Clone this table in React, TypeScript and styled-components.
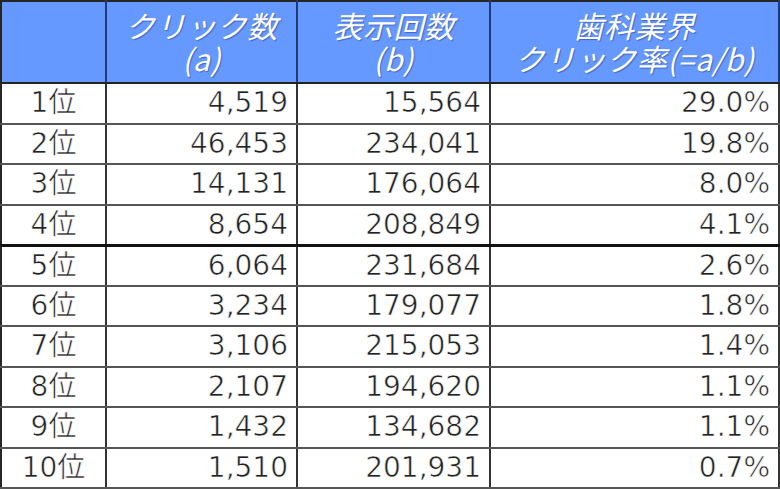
import { createGlobalStyle } from 'styled-components';
import styled from 'styled-components';

const GlobalStyle = createGlobalStyle`
  html, body {
    margin: 0;
    padding: 0;
    background: #ffffff;
  }
`;

const Table = styled.table`
  width: 780px;
  height: 489px;
  border-collapse: collapse;
  table-layout: fixed;
  border: 2px solid #262626;
  font-family: "DejaVu Sans", "Noto Sans CJK JP", sans-serif;
`;

const HeadRow = styled.tr`
  height: 82px;
  background: #6699ff;
`;

const HeadCell = styled.th`
  padding: 0 4px;
  border-right: 2px solid #1f3a76;
  border-bottom: 2px solid #222222;
  color: #ffffff;
  font-family: "Noto Sans CJK JP", sans-serif;
  font-size: 30px;
  font-weight: 400;
  font-style: italic;
  letter-spacing: 0.5px;
  line-height: 33px;
  text-align: center;
  vertical-align: middle;
  text-shadow: 1px 1px 1px rgba(20, 40, 110, 0.45);
  white-space: nowrap;
`;

const BodyRow = styled.tr<{ $split?: boolean }>`
  height: 40px;

  & > td {
    border-bottom: ${(p) => (p.$split ? '3px solid #111111' : '2px solid #555555')};
  }
`;

const RankCell = styled.td`
  padding: 0;
  border-right: 2px solid #333333;
  color: #222222;
  font-size: 28px;
  line-height: 36px;
  text-align: center;
  vertical-align: middle;
  -webkit-text-stroke: 0.6px #ffffff;
  paint-order: fill stroke;
`;

const NumCell = styled.td`
  padding: 0 8px 0 0;
  border-right: 2px solid #333333;
  color: #222222;
  font-size: 28px;
  line-height: 36px;
  text-align: right;
  vertical-align: middle;
  -webkit-text-stroke: 0.6px #ffffff;
  paint-order: fill stroke;
`;

type Row = {
  rank: string;
  clicks: string;
  views: string;
  rate: string;
};

const rows: Row[] = [
  { rank: '1位', clicks: '4,519', views: '15,564', rate: '29.0%' },
  { rank: '2位', clicks: '46,453', views: '234,041', rate: '19.8%' },
  { rank: '3位', clicks: '14,131', views: '176,064', rate: '8.0%' },
  { rank: '4位', clicks: '8,654', views: '208,849', rate: '4.1%' },
  { rank: '5位', clicks: '6,064', views: '231,684', rate: '2.6%' },
  { rank: '6位', clicks: '3,234', views: '179,077', rate: '1.8%' },
  { rank: '7位', clicks: '3,106', views: '215,053', rate: '1.4%' },
  { rank: '8位', clicks: '2,107', views: '194,620', rate: '1.1%' },
  { rank: '9位', clicks: '1,432', views: '134,682', rate: '1.1%' },
  { rank: '10位', clicks: '1,510', views: '201,931', rate: '0.7%' },
];

export default function App(): JSX.Element {
  return (
    <>
      <GlobalStyle />
      <Table>
        <colgroup>
          <col style={{ width: 105 }} />
          <col style={{ width: 191 }} />
          <col style={{ width: 193 }} />
          <col />
        </colgroup>
        <thead>
          <HeadRow>
            <HeadCell />
            <HeadCell>
              クリック数
              <br />
              (a)
            </HeadCell>
            <HeadCell>
              表示回数
              <br />
              (b)
            </HeadCell>
            <HeadCell>
              歯科業界
              <br />
              クリック率(=a/b)
            </HeadCell>
          </HeadRow>
        </thead>
        <tbody>
          {rows.map((row, i) => (
            <BodyRow key={row.rank} $split={i === 3}>
              <RankCell>{row.rank}</RankCell>
              <NumCell>{row.clicks}</NumCell>
              <NumCell>{row.views}</NumCell>
              <NumCell>{row.rate}</NumCell>
            </BodyRow>
          ))}
        </tbody>
      </Table>
    </>
  );
}
